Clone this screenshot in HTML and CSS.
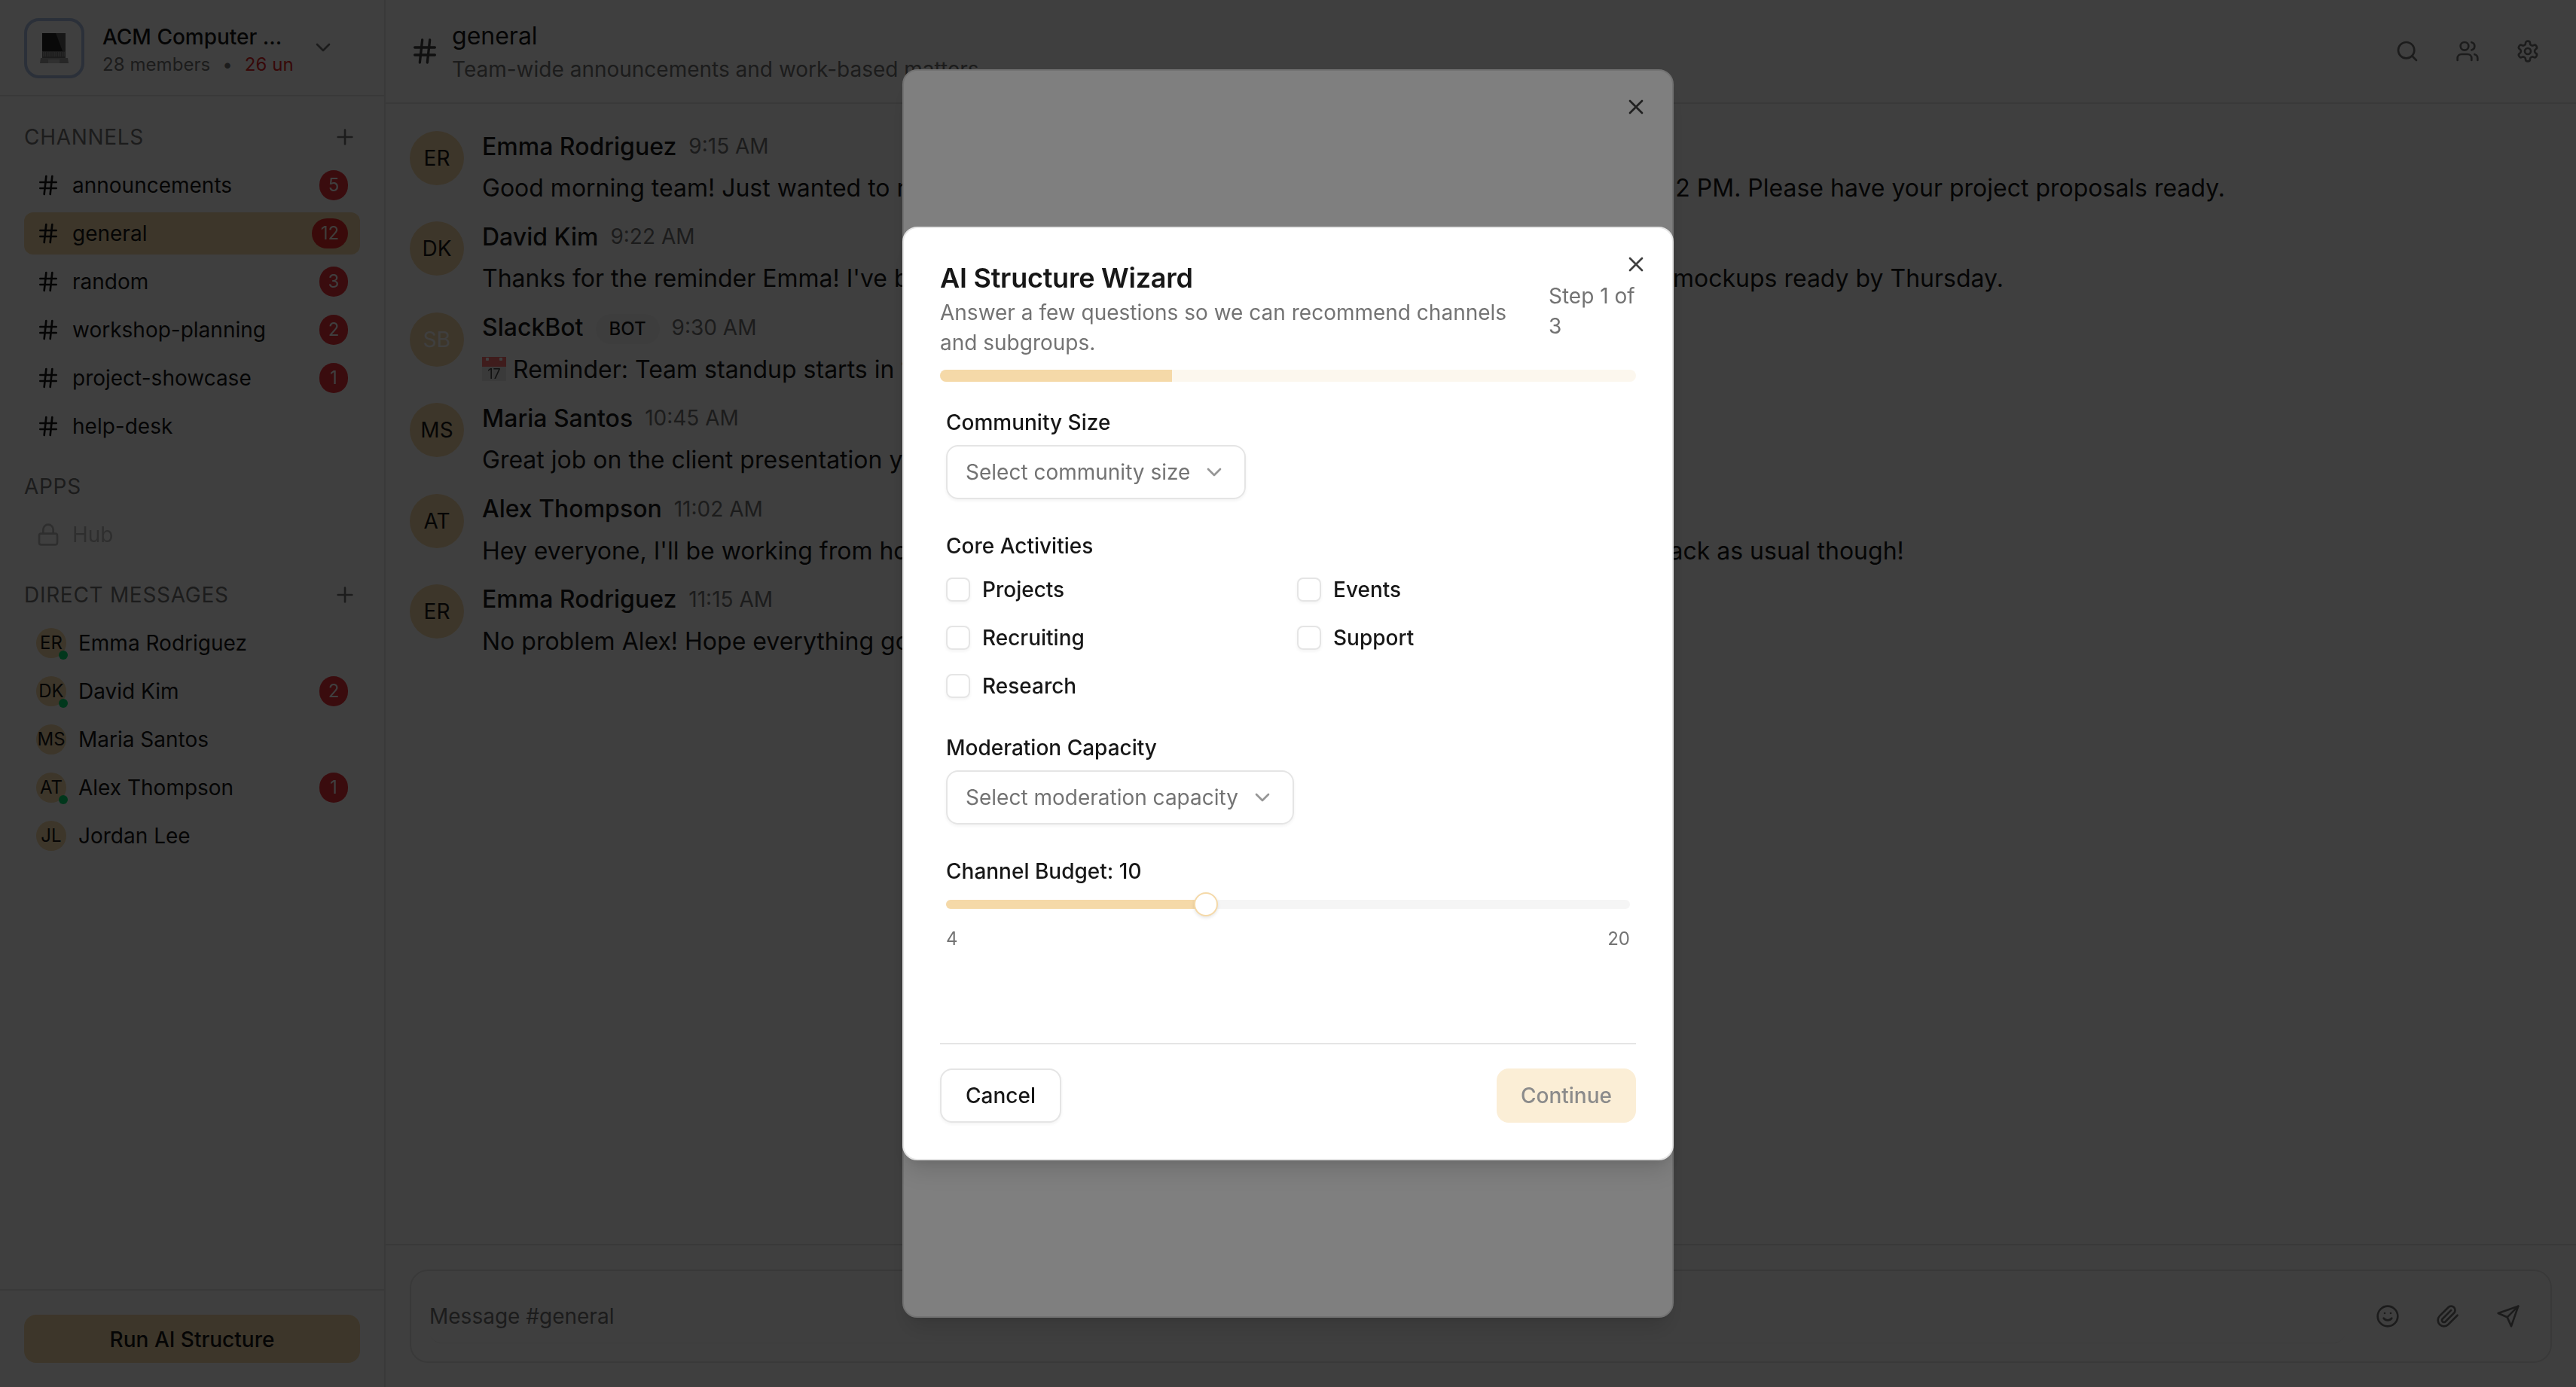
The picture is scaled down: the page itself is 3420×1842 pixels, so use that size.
FILE: index.html
```html
<!DOCTYPE html>
<html lang="en">
<head>
<meta charset="utf-8">
<title>ACM Computer Society - general</title>
<link rel="stylesheet" href="styles.css">
</head>
<body>
<svg class="sprite" width="0" height="0" aria-hidden="true">
  <defs>
    <symbol id="i-hash" viewBox="0 0 24 24"><line x1="4" x2="20" y1="9" y2="9"/><line x1="4" x2="20" y1="15" y2="15"/><line x1="10" x2="8" y1="3" y2="21"/><line x1="16" x2="14" y1="3" y2="21"/></symbol>
    <symbol id="i-plus" viewBox="0 0 24 24"><path d="M5 12h14"/><path d="M12 5v14"/></symbol>
    <symbol id="i-x" viewBox="0 0 24 24"><path d="M18 6 6 18"/><path d="m6 6 12 12"/></symbol>
    <symbol id="i-chev" viewBox="0 0 24 24"><path d="m6 9 6 6 6-6"/></symbol>
    <symbol id="i-lock" viewBox="0 0 24 24"><rect x="3" y="11" width="18" height="11" rx="2" ry="2"/><path d="M7 11V7a5 5 0 0 1 10 0v4"/></symbol>
    <symbol id="i-search" viewBox="0 0 24 24"><circle cx="11" cy="11" r="8"/><path d="m21 21-4.3-4.3"/></symbol>
    <symbol id="i-users" viewBox="0 0 24 24"><path d="M16 21v-2a4 4 0 0 0-4-4H6a4 4 0 0 0-4 4v2"/><circle cx="9" cy="7" r="4"/><path d="M22 21v-2a4 4 0 0 0-3-3.87"/><path d="M16 3.13a4 4 0 0 1 0 7.75"/></symbol>
    <symbol id="i-gear" viewBox="0 0 24 24"><path d="M12.22 2h-.44a2 2 0 0 0-2 2v.18a2 2 0 0 1-1 1.73l-.43.25a2 2 0 0 1-2 0l-.15-.08a2 2 0 0 0-2.73.73l-.22.38a2 2 0 0 0 .73 2.73l.15.1a2 2 0 0 1 1 1.72v.51a2 2 0 0 1-1 1.74l-.15.09a2 2 0 0 0-.73 2.73l.22.38a2 2 0 0 0 2.73.73l.15-.08a2 2 0 0 1 2 0l.43.25a2 2 0 0 1 1 1.73V20a2 2 0 0 0 2 2h.44a2 2 0 0 0 2-2v-.18a2 2 0 0 1 1-1.73l.43-.25a2 2 0 0 1 2 0l.15.08a2 2 0 0 0 2.73-.73l.22-.39a2 2 0 0 0-.73-2.73l-.15-.08a2 2 0 0 1-1-1.74v-.5a2 2 0 0 1 1-1.74l.15-.09a2 2 0 0 0 .73-2.73l-.22-.38a2 2 0 0 0-2.73-.73l-.15.08a2 2 0 0 1-2 0l-.43-.25a2 2 0 0 1-1-1.73V4a2 2 0 0 0-2-2z"/><circle cx="12" cy="12" r="3"/></symbol>
    <symbol id="i-smile" viewBox="0 0 24 24"><circle cx="12" cy="12" r="10"/><path d="M8 14s1.5 2 4 2 4-2 4-2"/><line x1="9" x2="9.01" y1="9" y2="9"/><line x1="15" x2="15.01" y1="9" y2="9"/></symbol>
    <symbol id="i-clip" viewBox="0 0 24 24"><path d="m21.44 11.05-9.19 9.19a6 6 0 0 1-8.49-8.49l8.57-8.57A4 4 0 1 1 18 8.84l-8.59 8.57a2 2 0 0 1-2.83-2.83l8.49-8.48"/></symbol>
    <symbol id="i-send" viewBox="0 0 24 24"><path d="m22 2-7 20-4-9-9-4Z"/><path d="M22 2 11 13"/></symbol>
  </defs>
</svg>

<div class="app">
  <aside class="sidebar">
    <header class="workspace">
      <div class="logo">
        <svg class="laptop" viewBox="0 0 40 40">
          <rect x="4" y="0" width="31" height="24" fill="#0a0a0a"/>
          <path d="M22 0h13v24h-4z" fill="#1a1a1a"/>
          <rect x="4" y="24" width="31" height="9" fill="#1f1f1f"/>
          <path d="M5 26h29M5 28h29M5 30h29" stroke="#383838" stroke-width="1" stroke-dasharray="1.5 1"/>
          <path d="M2 33h36l1 7H1z" fill="#2c2c2c"/>
          <rect x="12" y="35" width="15" height="5" fill="#363636"/>
        </svg>
      </div>
      <div class="ws-text">
        <div class="ws-name">ACM Computer ...</div>
        <div class="ws-meta"><span>28 members</span><span class="ws-dot">•</span><span class="ws-unread">26 un</span></div>
      </div>
      <svg class="ico ico-chev"><use href="#i-chev"/></svg>
    </header>

    <nav class="side-scroll">
      <section class="side-section">
        <div class="side-label"><span>Channels</span><svg class="ico"><use href="#i-plus"/></svg></div>
        <ul class="side-list">
          <li class="side-row"><svg class="ico"><use href="#i-hash"/></svg><span class="row-name">announcements</span><span class="badge">5</span></li>
          <li class="side-row is-active"><svg class="ico"><use href="#i-hash"/></svg><span class="row-name">general</span><span class="badge badge-wide">12</span></li>
          <li class="side-row"><svg class="ico"><use href="#i-hash"/></svg><span class="row-name">random</span><span class="badge">3</span></li>
          <li class="side-row"><svg class="ico"><use href="#i-hash"/></svg><span class="row-name">workshop-planning</span><span class="badge">2</span></li>
          <li class="side-row"><svg class="ico"><use href="#i-hash"/></svg><span class="row-name">project-showcase</span><span class="badge">1</span></li>
          <li class="side-row"><svg class="ico"><use href="#i-hash"/></svg><span class="row-name">help-desk</span></li>
        </ul>
      </section>
      <section class="side-section">
        <div class="side-label"><span>Apps</span></div>
        <ul class="side-list">
          <li class="side-row is-locked"><svg class="ico"><use href="#i-lock"/></svg><span class="row-name">Hub</span></li>
        </ul>
      </section>
      <section class="side-section">
        <div class="side-label"><span>Direct Messages</span><svg class="ico"><use href="#i-plus"/></svg></div>
        <ul class="side-list">
          <li class="side-row"><span class="dm-av is-online">ER</span><span class="row-name">Emma Rodriguez</span></li>
          <li class="side-row"><span class="dm-av is-online">DK</span><span class="row-name">David Kim</span><span class="badge">2</span></li>
          <li class="side-row"><span class="dm-av">MS</span><span class="row-name">Maria Santos</span></li>
          <li class="side-row"><span class="dm-av is-online">AT</span><span class="row-name">Alex Thompson</span><span class="badge">1</span></li>
          <li class="side-row"><span class="dm-av">JL</span><span class="row-name">Jordan Lee</span></li>
        </ul>
      </section>
    </nav>

    <footer class="side-foot">
      <button class="run-btn">Run AI Structure</button>
    </footer>
  </aside>

  <main class="main">
    <header class="chan-head">
      <svg class="ico ico-lg"><use href="#i-hash"/></svg>
      <div class="chan-text">
        <div class="chan-name">general</div>
        <div class="chan-desc">Team-wide announcements and work-based matters</div>
      </div>
      <div class="head-actions">
        <span class="icon-btn"><svg class="ico"><use href="#i-search"/></svg></span>
        <span class="icon-btn"><svg class="ico"><use href="#i-users"/></svg></span>
        <span class="icon-btn"><svg class="ico"><use href="#i-gear"/></svg></span>
      </div>
    </header>

    <div class="messages">
      <article class="msg">
        <div class="msg-av">ER</div>
        <div class="msg-body">
          <div class="msg-meta"><span class="msg-name">Emma Rodriguez</span><time class="msg-time">9:15 AM</time></div>
          <p class="msg-text">Good morning team! Just wanted to remind everyone about our all-hands meeting today in the offices at 2 PM. Please have your project proposals ready.</p>
        </div>
      </article>
      <article class="msg">
        <div class="msg-av">DK</div>
        <div class="msg-body">
          <div class="msg-meta"><span class="msg-name">David Kim</span><time class="msg-time">9:22 AM</time></div>
          <p class="msg-text">Thanks for the reminder Emma! I've been working on the new designs and will have the updated landing mockups ready by Thursday.</p>
        </div>
      </article>
      <article class="msg">
        <div class="msg-av msg-av-bot">SB</div>
        <div class="msg-body">
          <div class="msg-meta"><span class="msg-name">SlackBot</span><span class="bot-tag">BOT</span><time class="msg-time">9:30 AM</time></div>
          <p class="msg-text"><svg class="cal" viewBox="0 0 32 32"><rect width="32" height="32" fill="#3a3a3a"/><rect width="32" height="13" fill="#451c1c"/><circle cx="7" cy="3" r="2" fill="#6a6a6a"/><circle cx="25" cy="3" r="2" fill="#6a6a6a"/><text x="16" y="29" class="cal-num">17</text></svg> Reminder: Team standup starts in 15 minutes</p>
        </div>
      </article>
      <article class="msg">
        <div class="msg-av">MS</div>
        <div class="msg-body">
          <div class="msg-meta"><span class="msg-name">Maria Santos</span><time class="msg-time">10:45 AM</time></div>
          <p class="msg-text">Great job on the client presentation yesterday everyone!</p>
        </div>
      </article>
      <article class="msg">
        <div class="msg-av">AT</div>
        <div class="msg-body">
          <div class="msg-meta"><span class="msg-name">Alex Thompson</span><time class="msg-time">11:02 AM</time></div>
          <p class="msg-text">Hey everyone, I'll be working from home tomorrow due to a family commitments. Should be online and back as usual though!</p>
        </div>
      </article>
      <article class="msg">
        <div class="msg-av">ER</div>
        <div class="msg-body">
          <div class="msg-meta"><span class="msg-name">Emma Rodriguez</span><time class="msg-time">11:15 AM</time></div>
          <p class="msg-text">No problem Alex! Hope everything goes well.</p>
        </div>
      </article>
    </div>

    <footer class="composer-wrap">
      <div class="composer">
        <div class="composer-input">Message #general</div>
        <div class="composer-actions">
          <span class="icon-btn"><svg class="ico"><use href="#i-smile"/></svg></span>
          <span class="icon-btn"><svg class="ico"><use href="#i-clip"/></svg></span>
          <span class="icon-btn"><svg class="ico"><use href="#i-send"/></svg></span>
        </div>
      </div>
    </footer>
  </main>
</div>

<div class="overlay"></div>
<div class="dialog dialog-back">
  <svg class="ico dialog-close"><use href="#i-x"/></svg>
</div>
<div class="overlay"></div>

<div class="dialog dialog-front">
  <svg class="ico dialog-close"><use href="#i-x"/></svg>
  <div class="wiz-head">
    <div class="wiz-title-block">
      <h2 class="wiz-title">AI Structure Wizard</h2>
      <p class="wiz-sub">Answer a few questions so we can recommend channels and subgroups.</p>
    </div>
    <div class="wiz-step">Step 1 of 3</div>
  </div>
  <div class="progress"><div class="progress-fill"></div></div>

  <div class="wiz-body">
    <div class="field">
      <label class="field-label">Community Size</label>
      <div class="select"><span>Select community size</span><svg class="ico"><use href="#i-chev"/></svg></div>
    </div>
    <div class="field">
      <label class="field-label">Core Activities</label>
      <div class="checks">
        <div class="check"><span class="box"></span>Projects</div>
        <div class="check"><span class="box"></span>Events</div>
        <div class="check"><span class="box"></span>Recruiting</div>
        <div class="check"><span class="box"></span>Support</div>
        <div class="check"><span class="box"></span>Research</div>
      </div>
    </div>
    <div class="field">
      <label class="field-label">Moderation Capacity</label>
      <div class="select"><span>Select moderation capacity</span><svg class="ico"><use href="#i-chev"/></svg></div>
    </div>
    <div class="field">
      <label class="field-label">Channel Budget: 10</label>
      <div class="slider"><div class="slider-track"><div class="slider-fill"></div></div><div class="slider-thumb"></div></div>
      <div class="slider-ends"><span>4</span><span>20</span></div>
    </div>
  </div>

  <div class="wiz-foot">
    <button class="btn btn-outline">Cancel</button>
    <button class="btn btn-primary">Continue</button>
  </div>
</div>
</body>
</html>
```

FILE: styles.css
```css
* { box-sizing: border-box; margin: 0; padding: 0; }
html, body { height: 100%; }
body {
  font-family: Inter, "Noto Sans", sans-serif;
  font-size: 28px;
  color: #171717;
  background: #fff;
  overflow: hidden;
}
ul { list-style: none; }
button { font: inherit; border: 0; background: none; color: inherit; }
.sprite { position: absolute; }

.ico {
  width: 32px; height: 32px; flex: none;
  fill: none; stroke: currentColor; stroke-width: 2;
  stroke-linecap: round; stroke-linejoin: round;
}
.ico-lg { width: 40px; height: 40px; color: #404040; }

.app { display: flex; height: 1842px; width: 3420px; }

/* Sidebar */
.sidebar {
  width: 512px; flex: none; display: flex; flex-direction: column;
  border-right: 2px solid #e5e5e5; background: #fff;
}
.workspace {
  height: 128px; flex: none; display: flex; align-items: flex-start;
  padding: 24px 32px 0; border-bottom: 2px solid #e5e5e5;
}
.logo {
  width: 80px; height: 80px; flex: none; border: 4px solid #acc0e4; border-radius: 20px;
  display: flex; align-items: center; justify-content: center; background: #fff;
}
.laptop { width: 40px; height: 40px; filter: brightness(3.6); }
.ws-text { margin-left: 24px; width: 256px; flex: none; overflow: hidden; white-space: nowrap; }
.ws-name { font-size: 28px; line-height: 40px; font-weight: 500; margin-top: 5px; }
.ws-meta { font-size: 24px; line-height: 32px; margin-top: 1px; color: #737373; display: flex; letter-spacing: .06px; }
.ws-dot { margin: 0 16px; }
.ws-unread { color: #dc2626; }
.ico-chev { margin: 23px 0 0 21px; color: #737373; }

.side-scroll { flex: 1; padding-top: 34px; display: flex; flex-direction: column; gap: 32px; }
.side-section { padding: 0 32px; }
.side-label {
  height: 40px; display: flex; align-items: center; justify-content: space-between;
  font-size: 28px; text-transform: uppercase; letter-spacing: 0.7px; color: #737373;
  margin-bottom: 16px; padding-right: 4px;
}
.side-list { display: flex; flex-direction: column; gap: 8px; }
.side-row {
  height: 56px; border-radius: 12px; padding: 0 16px;
  display: flex; align-items: center; gap: 16px; font-size: 28px;
}
.row-name { flex: 1; white-space: nowrap; }
.is-active { background: #f5d9a8; }
.is-locked { color: #a3a3a3; opacity: .75; }
.badge {
  min-width: 38px; height: 40px; padding: 0 8px; border-radius: 20px;
  background: #e7000b; color: #fff; font-size: 24px; line-height: 40px; text-align: center;
  opacity: .8;
}
.badge-wide { min-width: 48px; }
.dm-av {
  width: 40px; height: 40px; border-radius: 50%; flex: none; position: relative;
  background: #f5d9a8; font-size: 24px; line-height: 40px; text-align: center;
  white-space: nowrap; display: flex; align-items: center; justify-content: center;
}
.is-online::after {
  content: ""; position: absolute; right: -2px; bottom: -2px;
  width: 12px; height: 12px; border-radius: 50%; background: #05df72;
}
.side-foot { flex: none; padding: 32px; border-top: 2px solid #e5e5e5; }
.run-btn {
  width: 100%; height: 64px; border-radius: 16px; background: #f5d9a8;
  font-weight: 500; font-size: 28px; display: block; padding-top: 2px;
}

/* Main */
.main { flex: 1; min-width: 0; display: flex; flex-direction: column; }
.chan-head {
  height: 138px; flex: none; display: flex; align-items: center; gap: 16px;
  padding: 0 32px; border-bottom: 2px solid #e5e5e5;
}
.chan-text { flex: 1; }
.chan-name { font-size: 32px; line-height: 48px; }
.chan-desc { font-size: 28px; line-height: 40px; color: #737373; }
.head-actions, .composer-actions { display: flex; gap: 16px; flex: none; }
.icon-btn { width: 64px; height: 64px; display: flex; align-items: center; justify-content: center; color: #737373; }

.messages { flex: 1; padding: 36px 32px 0; display: flex; flex-direction: column; gap: 24.4px; }
.msg { display: flex; gap: 24px; height: 96px; white-space: nowrap; }
.msg-av {
  width: 72px; height: 72px; border-radius: 50%; background: #f5d9a8; flex: none;
  display: flex; align-items: center; justify-content: center; font-size: 28px;
}
.msg-av-bot { color: #fff; }
.msg-meta { display: flex; align-items: center; gap: 16px; height: 48px; margin-top: -4px; }
.msg-name { font-size: 32px; font-weight: 500; }
.msg-time { font-size: 28px; color: #737373; }
.bot-tag {
  font-size: 24px; font-weight: 500; height: 40px; line-height: 40px; padding: 0 18px;
  border-radius: 20px; background: #f5f5f5; margin-top: 4px;
}
.msg-text { font-size: 32px; line-height: 48px; margin-top: 8px; }
.cal { width: 32px; height: 32px; vertical-align: -4px; filter: brightness(4); }
.cal-num { font-size: 18px; text-anchor: middle; fill: #111; font-family: Inter, sans-serif; }

.composer-wrap { flex: none; padding: 32px; border-top: 2px solid #e5e5e5; }
.composer {
  height: 124px; border: 2px solid #e5e5e5; border-radius: 24px; padding: 0 24px;
  display: flex; gap: 24px; align-items: center;
}
.composer-input {
  flex: 1; height: 72px; line-height: 72px; border-radius: 16px; color: #737373;
  font-size: 28px; border-bottom: 1px solid #f0f0f0;
}

/* Overlays and dialogs */
.overlay { position: fixed; inset: 0; background: rgba(0,0,0,.5); }
.dialog {
  position: fixed; left: 1198px; width: 1024px; background: #fff;
  border: 2px solid #e5e5e5; border-radius: 20px;
  box-shadow: 0 20px 30px -6px rgba(0,0,0,.12), 0 8px 12px -8px rgba(0,0,0,.1);
}
.dialog-back { top: 92px; height: 1658px; }
.dialog-front {
  top: 301px; height: 1240px; padding: 48px;
  display: flex; flex-direction: column;
}
.dialog-close { position: absolute; top: 32px; right: 32px; color: #404040; }

.wiz-head { display: flex; align-items: center; gap: 32px; }
.wiz-title-block { flex: 1; }
.wiz-title { font-size: 36px; line-height: 36px; font-weight: 600; letter-spacing: -.25px; }
.wiz-sub { font-size: 28px; line-height: 40px; color: #737373; margin-top: 8px; }
.wiz-step { flex: 0 0 116px; font-size: 28px; line-height: 40px; color: #737373; }
.progress { height: 16px; margin-top: 16px; border-radius: 8px; background: #fcf7ee; overflow: hidden; flex: none; }
.progress-fill { height: 100%; width: 33.33%; background: #f5d9a8; }

.wiz-body { flex: 1; padding: 40px 8px 0; display: flex; flex-direction: column; gap: 48px; }
.field-label { display: block; font-size: 28px; line-height: 28px; font-weight: 500; }
.select {
  margin-top: 16px; width: max-content; height: 72px; padding: 0 24px;
  display: flex; align-items: center; gap: 16px; color: #737373;
  border: 2px solid #e5e5e5; border-radius: 16px; box-shadow: 0 2px 4px rgba(0,0,0,.05);
}
.select .ico { opacity: .75; }
.checks { margin-top: 24px; display: grid; grid-template-columns: 1fr 1fr; gap: 24px; }
.check { height: 40px; display: flex; align-items: center; gap: 16px; font-size: 28px; font-weight: 500; }
.box {
  width: 32px; height: 32px; border: 2px solid #e5e5e5; border-radius: 8px; flex: none;
  box-shadow: 0 2px 4px rgba(0,0,0,.05);
}
.slider { position: relative; height: 32px; margin-top: 14px; display: flex; align-items: center; }
.slider-track { width: 100%; height: 12px; border-radius: 6px; background: #f5f5f5; overflow: hidden; }
.slider-fill { height: 100%; width: 345px; background: #f5d9a8; }
.slider-thumb {
  position: absolute; left: 329px; top: 0; width: 32px; height: 32px; border-radius: 50%;
  background: #fff; border: 2px solid #f5d9a8; box-shadow: 0 2px 4px rgba(0,0,0,.1);
}
.slider-ends { display: flex; justify-content: space-between; font-size: 24px; line-height: 32px; color: #737373; margin-top: 14px; }

.wiz-foot {
  flex: none; display: flex; justify-content: space-between; align-items: flex-end;
  border-top: 2px solid #e5e5e5; padding-top: 32px;
}
.btn { height: 72px; padding: 0 32px; border-radius: 16px; font-size: 28px; font-weight: 500; }
.btn-outline { border: 2px solid #e5e5e5; box-shadow: 0 2px 4px rgba(0,0,0,.05); background: #fff; }
.btn-primary { background: #fbeed6; color: #8b8b8b; }
```
